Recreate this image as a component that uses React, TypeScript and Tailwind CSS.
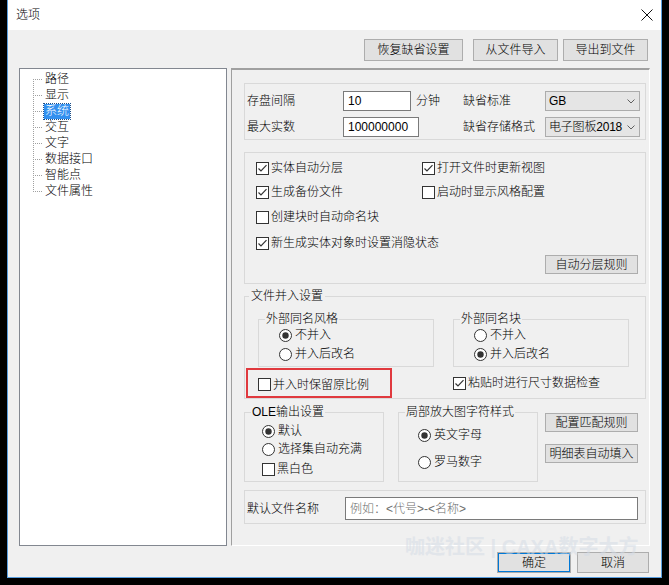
import React from "react"

const treeItems = ["路径", "显示", "系统", "交互", "文字", "数据接口", "智能点", "文件属性"]

function Check({ on }: { on?: boolean }) {
    return (
        <svg width="13" height="13" viewBox="0 0 13 13" className="shrink-0">
            <rect x="0.5" y="0.5" width="12" height="12" fill="#fff" stroke="#333" />
            {on && <path d="M2.5 6.5 L5 9 L10.5 3.2" fill="none" stroke="#333" strokeWidth="1.2" />}
        </svg>
    )
}

function Radio({ on }: { on?: boolean }) {
    return (
        <svg width="13" height="13" viewBox="0 0 13 13" className="shrink-0">
            <circle cx="6.5" cy="6.5" r="6" fill="#fff" stroke="#333" />
            {on && <circle cx="6.5" cy="6.5" r="3.2" fill="#333" />}
        </svg>
    )
}

function CheckRow({ on, label, className = "" }: { on?: boolean; label: string; className?: string }) {
    return (
        <div className={`flex items-center gap-[2px] h-[16px] ${className}`}>
            <Check on={on} />
            <span>{label}</span>
        </div>
    )
}

function RadioRow({ on, label, className = "" }: { on?: boolean; label: string; className?: string }) {
    return (
        <div className={`flex items-center gap-[3px] h-[16px] ${className}`}>
            <Radio on={on} />
            <span>{label}</span>
        </div>
    )
}

function Btn({ children, className = "" }: { children: React.ReactNode; className?: string }) {
    return (
        <button type="button" className={`flex items-center justify-center bg-[#e1e1e1] border border-[#adadad] ${className}`}>
            {children}
        </button>
    )
}

function Combo({ value }: { value: string }) {
    return (
        <div className="w-[95px] h-[20px] flex items-center justify-between bg-[#e5e5e5] border border-[#acacac] pl-[3px] pr-[4px]">
            <span className="tracking-[-0.2px]">{value}</span>
            <svg width="8" height="5" viewBox="0 0 8 5" className="shrink-0">
                <path d="M0.5 0.5 L4 4 L7.5 0.5" fill="none" stroke="#606060" />
            </svg>
        </div>
    )
}

function Connector({ first, last }: { first?: boolean; last?: boolean }) {
    return (
        <svg width="11" height="16" viewBox="0 0 11 16" className="shrink-0">
            <line x1="0.5" y1={first ? 8 : 0} x2="0.5" y2={last ? 8 : 16} stroke="#a0a0a0" strokeDasharray="1 1" />
            <line x1="0" y1="8.5" x2="10" y2="8.5" stroke="#a0a0a0" strokeDasharray="1 1" />
        </svg>
    )
}

export default function App() {
    return (
        <div className="relative w-[669px] h-[585px] bg-black overflow-hidden font-['Liberation_Sans','Noto_Sans_CJK_SC',sans-serif] font-light text-[12px] leading-[16px] text-black">
            <div className="ml-[7px] w-[655px] h-[578px] flex flex-col bg-[#f0f0f0] border-x border-b border-[#5a9fe0]">
                {/* title bar */}
                <div className="h-[30px] shrink-0 bg-white flex items-center justify-between pl-[8px] pr-[8px]">
                    <span>选项</span>
                    <svg width="12" height="12" viewBox="0 0 12 12">
                        <path d="M0.5 0.5 L11.5 11.5 M11.5 0.5 L0.5 11.5" stroke="#111" strokeWidth="1" />
                    </svg>
                </div>

                {/* top buttons */}
                <div className="mt-[9px] flex justify-end pr-[13px]">
                    <Btn className="w-[99px] h-[22px]">恢复缺省设置</Btn>
                    <Btn className="ml-[10px] w-[85px] h-[22px]">从文件导入</Btn>
                    <Btn className="ml-[5px] w-[85px] h-[22px]">导出到文件</Btn>
                </div>

                {/* main */}
                <div className="mt-[7px] flex pl-[11px]">
                    <div className="w-[208px] h-[478px] bg-white border border-[#828790] pl-[13px] pt-[2px]">
                        {treeItems.map((t, i) => (
                            <div key={t} className="flex items-center h-[16px]">
                                <Connector first={i === 0} last={i === treeItems.length - 1} />
                                <span className={`px-[1px] leading-[15px] ${i === 2 ? "bg-[#3390ef] text-white outline outline-1 outline-dotted outline-[#1b4f8a]" : ""}`}>{t}</span>
                            </div>
                        ))}
                    </div>

                    <div className="ml-[4px] w-[419px] h-[478px] border-l border-t-2 border-r border-b border-[#a0a0a0] border-r-white border-b-white pl-[12px] pt-[13px] flex flex-col">
                        {/* group 1 */}
                        <div className="w-[402px] border border-[#d9d9d9] pt-[7px] pb-[2px] pl-[2px] flex flex-col gap-[6px]">
                            <div className="flex items-center h-[20px]">
                                <span className="w-[96px]">存盘间隔</span>
                                <input readOnly value="10" className="w-[68px] h-[20px] border border-[#7a7a7a] bg-white px-[4px] outline-none" />
                                <span className="ml-[5px] w-[47px]">分钟</span>
                                <span className="w-[82px]">缺省标准</span>
                                <Combo value="GB" />
                            </div>
                            <div className="flex items-center h-[20px]">
                                <span className="w-[96px]">最大实数</span>
                                <input readOnly value="100000000" className="w-[76px] h-[20px] border border-[#7a7a7a] bg-white px-[4px] outline-none" />
                                <span className="w-[44px]" />
                                <span className="w-[82px]">缺省存储格式</span>
                                <Combo value="电子图板2018" />
                            </div>
                        </div>

                        {/* group 2 */}
                        <div className="mt-[12px] w-[402px] border border-[#d9d9d9] pt-[7px] pb-[9px] pl-[11px] flex flex-col">
                            <div className="flex">
                                <CheckRow on label="实体自动分层" className="w-[166px]" />
                                <CheckRow on label="打开文件时更新视图" />
                            </div>
                            <div className="flex mt-[8px]">
                                <CheckRow on label="生成备份文件" className="w-[166px]" />
                                <CheckRow label="启动时显示风格配置" />
                            </div>
                            <CheckRow label="创建块时自动命名块" className="mt-[9px]" />
                            <CheckRow on label="新生成实体对象时设置消隐状态" className="mt-[10px]" />
                            <Btn className="self-end mr-[7px] mt-[4px] w-[93px] h-[19px]">自动分层规则</Btn>
                        </div>

                        {/* group 3 */}
                        <fieldset className="mt-[4px] w-[402px] border border-[#d9d9d9]">
                            <legend className="ml-[4px] px-[2px]">文件并入设置</legend>
                            <div className="flex mt-[7px] ml-[13px] gap-[19px]">
                                <fieldset className="w-[176px] border border-[#d9d9d9]">
                                    <legend className="ml-[6px] px-[1px]">外部同名风格</legend>
                                    <div className="pl-[20px] pb-[4px]">
                                        <RadioRow on label="不并入" />
                                        <RadioRow label="并入后改名" className="mt-[3px]" />
                                    </div>
                                </fieldset>
                                <fieldset className="w-[176px] border border-[#d9d9d9]">
                                    <legend className="ml-[6px] px-[1px]">外部同名块</legend>
                                    <div className="pl-[20px] pb-[4px]">
                                        <RadioRow label="不并入" />
                                        <RadioRow on label="并入后改名" className="mt-[3px]" />
                                    </div>
                                </fieldset>
                            </div>
                            <div className="flex items-center mt-[1px]">
                                <div className="ml-[1px] w-[146px] h-[30px] border-2 border-[#e0393e] pl-[10px] pt-[3px] flex items-center">
                                    <CheckRow label="并入时保留原比例" />
                                </div>
                                <CheckRow on label="粘贴时进行尺寸数据检查" className="ml-[61px]" />
                            </div>
                        </fieldset>

                        {/* OLE row */}
                        <div className="flex mt-[5px]">
                            <fieldset className="w-[140px] border border-[#d9d9d9]">
                                <legend className="ml-[6px] px-[1px]">OLE输出设置</legend>
                                <div className="pl-[17px] pb-[4px]">
                                    <RadioRow on label="默认" className="mt-[3px]" />
                                    <RadioRow label="选择集自动充满" className="mt-[2px]" />
                                    <CheckRow label="黑白色" className="mt-[4px]" />
                                </div>
                            </fieldset>
                            <fieldset className="ml-[14px] w-[140px] border border-[#d9d9d9]">
                                <legend className="ml-[6px] px-[1px]">局部放大图字符样式</legend>
                                <div className="pl-[19px]">
                                    <RadioRow on label="英文字母" className="mt-[7px]" />
                                    <RadioRow label="罗马数字" className="mt-[11px]" />
                                </div>
                            </fieldset>
                            <div className="ml-[7px] flex flex-col">
                                <Btn className="mt-[9px] w-[93px] h-[19px]">配置匹配规则</Btn>
                                <Btn className="mt-[12px] w-[93px] h-[19px]">明细表自动填入</Btn>
                            </div>
                        </div>

                        {/* default file name */}
                        <div className="mt-[8px] w-[402px] border border-[#d9d9d9] pt-[6px] pb-[3px] pl-[2px] flex items-center">
                            <span className="w-[98px]">默认文件名称</span>
                            <input readOnly placeholder="例如：<代号>-<名称>" className="w-[293px] h-[23px] border border-[#7a7a7a] bg-white px-[4px] outline-none placeholder:text-[#6d6d6d]" />
                        </div>
                    </div>
                </div>

                {/* bottom buttons */}
                <div className="mt-[6px] flex justify-end pr-[12px]">
                    <Btn className="w-[74px] h-[21px] border-[#0078d7] shadow-[inset_0_0_0_1px_#0078d7]">确定</Btn>
                    <Btn className="ml-[6px] w-[72px] h-[21px]">取消</Btn>
                </div>
            </div>

            <div className="absolute left-[405px] top-[535px] pointer-events-none whitespace-nowrap text-[20px] leading-[24px] font-bold text-[#d3dbe5] opacity-50">
                咖迷社区 | CAXA数字大方
            </div>
        </div>
    )
}
